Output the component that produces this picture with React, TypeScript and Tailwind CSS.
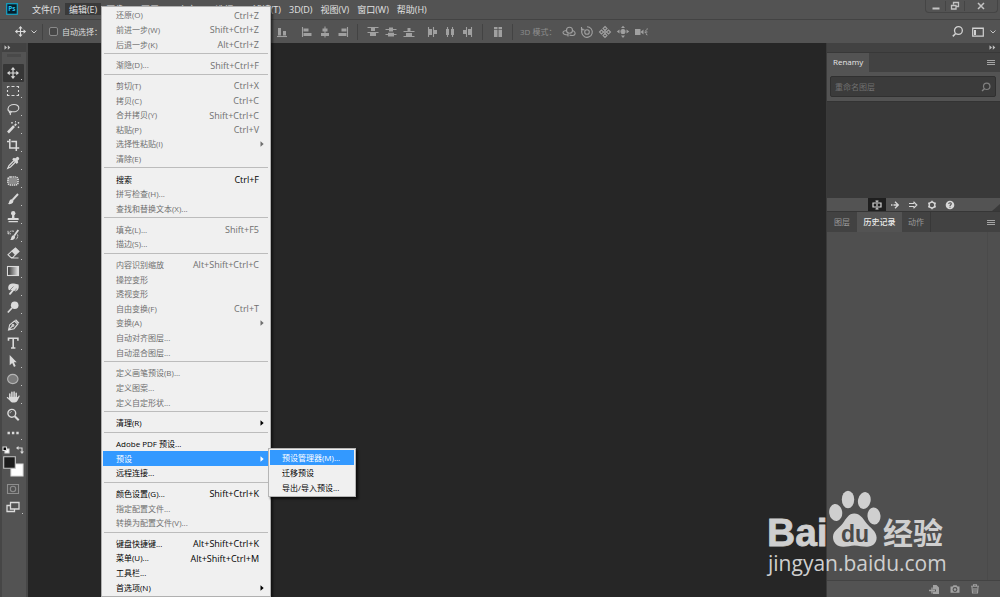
import React from "react";

type Entry = { label: string; keys?: string; on?: boolean; sub?: boolean; open?: boolean } | null;

const editMenu: Entry[] = [
  { label: "还原(O)", keys: "Ctrl+Z" },
  { label: "前进一步(W)", keys: "Shift+Ctrl+Z" },
  { label: "后退一步(K)", keys: "Alt+Ctrl+Z" },
  null,
  { label: "渐隐(D)...", keys: "Shift+Ctrl+F" },
  null,
  { label: "剪切(T)", keys: "Ctrl+X" },
  { label: "拷贝(C)", keys: "Ctrl+C" },
  { label: "合并拷贝(Y)", keys: "Shift+Ctrl+C" },
  { label: "粘贴(P)", keys: "Ctrl+V" },
  { label: "选择性粘贴(I)", sub: true },
  { label: "清除(E)" },
  null,
  { label: "搜索", keys: "Ctrl+F", on: true },
  { label: "拼写检查(H)..." },
  { label: "查找和替换文本(X)..." },
  null,
  { label: "填充(L)...", keys: "Shift+F5" },
  { label: "描边(S)..." },
  null,
  { label: "内容识别缩放", keys: "Alt+Shift+Ctrl+C" },
  { label: "操控变形" },
  { label: "透视变形" },
  { label: "自由变换(F)", keys: "Ctrl+T" },
  { label: "变换(A)", sub: true },
  { label: "自动对齐图层..." },
  { label: "自动混合图层..." },
  null,
  { label: "定义画笔预设(B)..." },
  { label: "定义图案..." },
  { label: "定义自定形状..." },
  null,
  { label: "清理(R)", sub: true, on: true },
  null,
  { label: "Adobe PDF 预设...", on: true },
  { label: "预设", sub: true, on: true, open: true },
  { label: "远程连接...", on: true },
  null,
  { label: "颜色设置(G)...", keys: "Shift+Ctrl+K", on: true },
  { label: "指定配置文件..." },
  { label: "转换为配置文件(V)..." },
  null,
  { label: "键盘快捷键...", keys: "Alt+Shift+Ctrl+K", on: true },
  { label: "菜单(U)...", keys: "Alt+Shift+Ctrl+M", on: true },
  { label: "工具栏...", on: true },
  { label: "首选项(N)", sub: true, on: true },
];

const documentMenus = ["文件(F)", "编辑(E)", "图像(I)", "图层(L)", "文字(Y)", "选择(S)", "滤镜(T)"];
const windowMenus = ["3D(D)", "视图(V)", "窗口(W)", "帮助(H)"];

function Icon({ children, className = "h-[14px] w-[14px]", box = "0 0 14 14" }: { children: React.ReactNode; className?: string; box?: string }) {
  return (
    <svg viewBox={box} className={`shrink-0 ${className}`} fill="none" stroke="currentColor" strokeWidth="1.1" aria-hidden="true">
      {children}
    </svg>
  );
}

const moveShape = (
  <>
    <path d="M7 3v8M3 7h8" strokeWidth="1.2" />
    <path d="M7 1l2.3 2.7H4.700zM7 13l2.300-2.700H4.700zM1 7l2.700-2.300v4.600zM13 7l-2.700-2.300v4.600z" fill="currentColor" stroke="none" />
  </>
);

const tools: { name: string; art: React.ReactNode; plain?: boolean }[] = [
  { name: "移动工具", art: moveShape },
  { name: "矩形选框工具", art: <path d="M1.500 4V2.500H3.500M5.500 2.500h3M10.500 2.500h2V4M12.500 6v2M12.500 10v1.500h-2M8.500 11.500h-3M3.500 11.500h-2V10M1.500 8V6" /> },
  { name: "套索工具", art: <path d="M4.200 9.600C2.700 9.200 1.800 8.200 2 6.700 2.300 4.300 5 2.500 8 2.500s5 1.500 4.800 3.700C12.500 8.500 9.700 10 6.500 9.800c-1 0-1.700-.8-2.500-.6-1 .3-.8 1.800.2 1.700.8-.1 1-.8.900-1.300M4.300 11c.3.700.2 1.400-.2 2" /> },
  { name: "魔棒工具", art: <><path d="M2 12.500l6-6.300" strokeWidth="2.600" /><path d="M8.700 5.600l1.600-1.700" strokeWidth="1.800" /><path d="M6 2v1.600M5.200 2.800h1.600M9.500 1v1.400M12.500 2v1.600M11.700 2.800h1.600M12.500 6.500v1.600M11.700 7.300h1.600" strokeWidth=".9" /></> },
  { name: "裁剪工具", art: <path d="M3.800 1v9h9.400M1 3.500h2M5.300 3.500h5v9.500" strokeWidth="1.500" /> },
  { name: "吸管工具", art: <><path d="M8 4.500L3 9.500l-1.200 2.800L4.500 11l5-5" strokeWidth="1.200" /><path d="M7 3.200l1-.8 1.300.8L11 1.600c.8-.6 2.200.7 1.500 1.500L11 4.700l.6 1.500-.8.900z" fill="currentColor" /></> },
  { name: "修补工具", art: <><rect x="2" y="3" width="10" height="8" rx="2.500" strokeWidth="1.700" strokeDasharray="1.400 .6" /><rect x="3" y="4" width="8" height="6" rx="1" fill="#8c8c8c" stroke="none" /></> },
  { name: "画笔工具", art: <><path d="M6.500 8L12 2" strokeWidth="1.900" /><path d="M5.800 7.200c1 .3 1.800 1.300 1.500 2.500-.4 2-3 2.800-5.600 2.300 1.500-.6 1.100-1.700 1.600-2.800.5-1.300 1.400-2.100 2.500-2z" fill="currentColor" stroke="none" /></> },
  { name: "仿制图章工具", art: <><circle cx="7.200" cy="3.300" r="2.200" fill="currentColor" stroke="none" /><path d="M6.200 4.500h2l.3 3.500H12c.5 0 .7.300.7.700V10H1.700V8.700c0-.5.300-.7.700-.7h3.500zM2.500 11h9.400v1.300H2.500z" fill="currentColor" stroke="none" /></> },
  { name: "历史记录画笔工具", art: <><path d="M8.200 7.700L12.300 2" strokeWidth="1.800" /><path d="M7.600 7.200c1 .3 1.700 1.200 1.400 2.300-.4 2-2.700 2.800-5 2.500 1.200-.7 1-1.700 1.400-2.800.4-1.200 1.200-2 2.200-2z" fill="currentColor" stroke="none" /><path d="M2 5.800C3.500 3.200 5.500 2.600 8 3.300M2 2.800v3h3M11.500 6.500c.7 2-.2 3.800-1.500 5" strokeWidth=".9" strokeDasharray="2 .5" /></> },
  { name: "橡皮擦工具", art: <><path d="M6 5l3.500-3 3.500 3.500-3.500 3.200z" fill="currentColor" /><path d="M5.800 5.200L2 8.700l2.800 2.800h2l2.500-2.700M5 12h7.500" /></> },
  { name: "渐变工具", art: <><defs><linearGradient id="ramp"><stop stopColor="#303030" /><stop offset="1" stopColor="#e8e8e8" /></linearGradient></defs><rect x="1.500" y="2.500" width="11" height="9" fill="url(#ramp)" /></> },
  { name: "涂抹工具", art: <><path d="M3 3c1.500-1.300 3-1.600 5-1.500l4.500 1c.5 2 .3 4-.8 5.500L9.500 9.500 7.500 8 5 8.300 2.800 8C2 6.500 2 4.500 3 3z" fill="currentColor" stroke="none" /><path d="M8.500 6.500L4 11.800" strokeWidth="1.900" strokeLinecap="round" /><path d="M7.500 4.500L4 8M9.500 9l.8-2.500" stroke="#6a6a6a" strokeWidth=".7" /></> },
  { name: "减淡工具", art: <><circle cx="8.700" cy="5.200" r="3.800" fill="currentColor" stroke="none" /><path d="M6 8l-4.200 4.500" strokeWidth="1.700" /></> },
  { name: "钢笔工具", art: <><path d="M2.500 12L3.700 6.700 8.500 3l3.200 3.200L8 10.700zM2.500 12l4-4.200" /><circle cx="7" cy="7.400" r=".9" /><path d="M9 2.300l1-1 3.300 3.500-1 1z" fill="currentColor" stroke="none" /></> },
  { name: "横排文字工具", art: <path d="M2.500 4.700V2.300h9.400v2.400M7.200 2.500v9.300M5 12h4.400" strokeWidth="1.600" /> },
  { name: "路径选择工具", art: <path d="M3.700 1l7 7.200H7.900l1.800 3.900-1.700.8-1.800-4-2.500 2.300z" fill="currentColor" stroke="none" /> },
  { name: "椭圆工具", art: <ellipse cx="6.800" cy="7" rx="5.200" ry="4.600" fill="#7b7b7b" stroke="#b4b4b4" /> },
  { name: "抓手工具", art: <><path d="M3.800 7.500V4M5.900 6.500V2.300M8.100 6.500V1.900M10.200 7V3.300" strokeWidth="1.500" strokeLinecap="round" /><path d="M3 6.700h8l.7.500 1.100-1.700c.8-.1 1.100.5.800 1.100l-2 4c-.7 1.300-1.500 2-3 2H7c-1.500 0-2.300-.8-3-1.900L.7 7.700c0-.8.900-1 1.500-.4L3 8.500z" fill="currentColor" stroke="none" /></> },
  { name: "缩放工具", plain: true, art: <><circle cx="5.800" cy="5.300" r="3.900" strokeWidth="1.400" /><path d="M4 5.300c0-1 .8-1.800 1.800-1.800" strokeWidth=".8" /><path d="M8.700 8.200l4 4" strokeWidth="2" /></> },
  { name: "编辑工具栏", art: <path d="M1.500 7h2.400M5.900 7h2.400M10.300 7h2.400" strokeWidth="2.400" /> },
];

function Bars() {
  return (
    <button aria-label="面板菜单" className="mr-[5px] flex h-full items-center text-[#a5a5a5]">
      <Icon className="h-[7px] w-[8px]" box="0 0 8 7"><path d="M0 1.500h8M0 3.500h8M0 5.500h8" /></Icon>
    </button>
  );
}

function Collapse() {
  return (
    <Icon className="h-[5px] w-[7px]" box="0 0 7 5">
      <path d="M.5.300L3 2.500.5 4.700zM3.800.300l2.500 2.200-2.500 2.200z" fill="currentColor" stroke="none" />
    </Icon>
  );
}

function OptButton({ name, children }: { name: string; children: React.ReactNode }) {
  return (
    <button aria-label={name} className="flex w-[18px] justify-center">
      <Icon>{children}</Icon>
    </button>
  );
}

const Divider = () => <span className="mx-[5px] h-[16px] w-[2px] border-l border-[#434343]" />;

function Row({ entry }: { entry: NonNullable<Entry> }) {
  const tone = entry.open ? "bg-[#3399ff] text-white" : entry.on ? "text-black" : "text-[#6f6f6f]";
  return (
    <div className="relative flex flex-1">
      <button role="menuitem" disabled={!entry.on} className={`flex flex-1 items-center justify-between pl-[13px] leading-none ${tone}`}>
        <span>{entry.label}</span>
        {entry.keys && <span className="pr-[10px] text-[9px] leading-none">{entry.keys}</span>}
        {entry.sub && (
          <Icon className="mr-[5px] h-[6px] w-[4px]" box="0 0 4 6"><path d="M.5.300v5.400L3.700 3z" fill="currentColor" stroke="none" /></Icon>
        )}
      </button>
      {entry.open && (
        <div role="menu" className="absolute -top-[3px] left-full -ml-px flex w-[88px] flex-col border border-[#b5b5b5] bg-[#f0f0f0] p-px text-black shadow-[2px_2px_2px_rgba(0,0,0,0.6)]">
          {["预设管理器(M)...", "迁移预设", "导出/导入预设..."].map((t, i) => (
            <button key={t} role="menuitem" className={`flex h-[15px] items-center pl-[12px] leading-none whitespace-nowrap ${i === 0 ? "bg-[#3399ff] text-white" : ""}`}>{t}</button>
          ))}
        </div>
      )}
    </div>
  );
}

function MenuButton({ label, open }: { label: string; open?: boolean }) {
  return (
    <button className={`flex h-[12px] items-center px-[4px] leading-none whitespace-nowrap ${open ? "bg-[#3a3a3a]" : ""}`}>{label}</button>
  );
}

function TopBar() {
  return (
    <header className="flex h-[20px] items-start border-b border-[#434343]">
      <svg viewBox="0 0 12 12" className="mt-[3px] mr-[10px] ml-[6px] h-[12px] w-[12px]" role="img" aria-label="Ps">
        <rect x=".7" y=".7" width="10.600" height="10.600" fill="#071e2b" stroke="#16a3c7" strokeWidth="1.200" />
        <text x="2.200" y="8.300" fontSize="6.500" fontWeight="700" fontFamily="Open Sans, sans-serif" fill="#23c3ee">Ps</text>
      </svg>
      <nav className="flex pt-[3px] text-[9px]">
        <div className="flex gap-px">
          {documentMenus.map((m) => <MenuButton key={m} label={m} open={m === "编辑(E)"} />)}
        </div>
        <div className="flex">
          {windowMenus.map((m) => <MenuButton key={m} label={m} />)}
        </div>
      </nav>
      <div className="mr-[2px] ml-auto flex h-[13px] items-center divide-x divide-[#454545] rounded-b-sm border border-t-0 border-[#454545] text-[#c4c4c4]">
        <button aria-label="最小化" className="flex w-[20px] justify-center"><Icon className="h-[10px] w-[10px]" box="0 0 10 10"><path d="M1.500 7.500h7" strokeWidth="2" /></Icon></button>
        <button aria-label="还原" className="flex w-[19px] justify-center"><Icon className="h-[10px] w-[10px]" box="0 0 10 10"><path d="M3.500 3.500V1.500h5v4h-2M1.500 4.500h4.500v3.500h-4.500z" strokeWidth="1.300" /></Icon></button>
        <button aria-label="关闭" className="flex w-[32px] justify-center"><Icon className="h-[10px] w-[10px]" box="0 0 10 10"><path d="M2 2l6 6M8 2l-6 6" strokeWidth="1.500" /></Icon></button>
      </div>
    </header>
  );
}

function OptionsBar() {
  return (
    <div className="flex h-[23px] items-center text-[#a0a0a0]">
      <div className="flex w-[273px] shrink-0 items-center text-[#dcdcdc]">
        <button aria-label="移动工具" className="ml-[14px] flex items-center gap-[4px]">
          <Icon className="h-[13px] w-[13px]">{moveShape}</Icon>
          <Icon className="h-[6px] w-[6px]" box="0 0 6 6"><path d="M.5 1.500L3 4l2.500-2.500" strokeWidth=".9" /></Icon>
        </button>
        <Divider />
        <label className="flex items-center gap-[4px] leading-none whitespace-nowrap">
          <input type="checkbox" className="h-[9px] w-[9px] appearance-none rounded-[2px] border border-[#8a8a8a] bg-[#474747]" />
          自动选择：
        </label>
      </div>
      <OptButton name="底对齐"><path d="M2 11.500h10" /><path d="M3 3h3v7.500H3zM8 6h3v4.500H8z" fill="currentColor" stroke="none" /></OptButton>
      <span className="w-[7px]" />
      <OptButton name="左对齐"><path d="M2.500 2v10" /><path d="M3.500 3.500h5v3h-5zM3.500 8h8v3h-8z" fill="currentColor" stroke="none" /></OptButton>
      <OptButton name="水平居中"><path d="M7 1.500v11" /><path d="M4.500 3.500h5v3h-5zM3 8h8v3H3z" fill="currentColor" stroke="none" /></OptButton>
      <OptButton name="右对齐"><path d="M11.500 2v10" /><path d="M5.500 3.500h5v3h-5zM2.500 8h8v3h-8z" fill="currentColor" stroke="none" /></OptButton>
      <Divider />
      <OptButton name="按顶分布"><path d="M1.500 2.500h11M1.500 7.500h11" /><path d="M5 3h4v3H5zM4 8h6v3H4z" fill="currentColor" stroke="none" /></OptButton>
      <OptButton name="垂直居中分布"><path d="M1.500 4.500h11M1.500 9.500h11" /><path d="M5 2.500h4v4H5zM4 7.800h6v3.700H4z" fill="currentColor" stroke="none" /></OptButton>
      <OptButton name="按底分布"><path d="M1.500 6.500h11M1.500 11.500h11" /><path d="M5.500 3h3v3.500h-3zM4 8h6v3.500H4z" fill="currentColor" stroke="none" /></OptButton>
      <span className="w-[5px]" />
      <OptButton name="按左分布"><path d="M3.500 2v10M8.500 2v10" /><path d="M4 4h3v6H4zM9 5h3v4H9z" fill="currentColor" stroke="none" /></OptButton>
      <OptButton name="水平居中分布"><path d="M4.500 2v10M9.500 2v10" /><path d="M3 4h3v6H3zM8 4h3v6H8z" fill="currentColor" stroke="none" /></OptButton>
      <OptButton name="按右分布"><path d="M5.500 2v10M10.500 2v10" /><path d="M2 5h3v4H2zM7 4h3v6H7z" fill="currentColor" stroke="none" /></OptButton>
      <Divider />
      <OptButton name="自动对齐图层"><path d="M3 2h3.500v10H3zM7.500 2H11v10H7.500z" fill="currentColor" stroke="none" /><path d="M2 4.500h10" stroke="#535353" strokeWidth=".7" /></OptButton>
      <Divider />
      <span className="w-[41px] pl-px leading-none whitespace-nowrap text-[#8e8e8e]">3D 模式：</span>
      <OptButton name="旋转 3D 对象"><circle cx="7.500" cy="5.200" r="3" /><path d="M5 5.500C2.500 5.500.8 6.500 1 7.600c.3 1.400 2.500 2.300 5 2.400M6 8.500v3M10.500 5.500c2 .7 3 2.200 2.500 3.500-.5 1.500-3 2-5.500 1" /></OptButton>
      <OptButton name="滚动 3D 对象"><circle cx="7" cy="7" r="2.300" /><path d="M3 3.500A5.300 5.300 0 1 0 7 1.700M1.500 2v2.700h3" /></OptButton>
      <OptButton name="拖动 3D 对象"><path d="M7 1.500l2 2-2 2-2-2zM7 8.500l2 2-2 2-2-2zM1.500 7l2-2 2 2-2 2zM8.500 7l2-2 2 2-2 2z" /><path d="M5 7h4M7 5v4" /></OptButton>
      <OptButton name="滑动 3D 对象"><circle cx="7" cy="6.500" r="2" fill="currentColor" /><path d="M7 .8l2 2.200H5zM7 13l2-2.500H5zM.8 6.500L3.500 4.500v4zM13.200 6.500l-2.700-2v4z" fill="currentColor" stroke="none" /></OptButton>
      <OptButton name="缩放 3D 对象"><path d="M1 4h5.500v6H1zM6.500 7l3-2.500v5z" fill="currentColor" stroke="none" /><path d="M13.500 3.500L11 7l2.500 3.500M12 7h2" strokeDasharray="1.500 .6" /></OptButton>
      <div className="ml-auto flex items-center text-[#d2d2d2]">
        <button aria-label="搜索" className="mr-[8px]"><Icon className="h-[13px] w-[13px]"><circle cx="8" cy="6" r="4.200" strokeWidth="1.400" /><path d="M5 9.200L2 12.300" strokeWidth="1.700" /></Icon></button>
        <button aria-label="工作区" className="mr-[4px] flex items-center gap-[6px]">
          <Icon className="h-[10px] w-[12px]" box="0 0 12 10"><path d="M.7 1.200h10.600v8H.7zM.7 1.500h10.600" strokeWidth="1.200" /><path d="M2 3h2v5H2z" fill="currentColor" stroke="none" /></Icon>
          <Icon className="h-[6px] w-[6px]" box="0 0 6 6"><path d="M.5 1.500L3 4l2.500-2.500" strokeWidth=".9" /></Icon>
        </button>
      </div>
    </div>
  );
}

function Toolbar() {
  return (
    <aside className="flex w-[28px] shrink-0 flex-col border-x-2 border-[#464646] bg-[#535353] text-[#dadada]">
      <div className="flex h-[9px] shrink-0 items-center bg-[#424242] pl-[2px] text-[#c0c0c0]"><Collapse /></div>
      <span className="mx-auto mt-[2px] mb-[7px] h-[3px] w-[14px] shrink-0 bg-[#494949]" />
      {tools.map((t, i) => (
        <button key={t.name} aria-label={t.name} className={`relative ml-px flex h-[18px] w-[21px] shrink-0 items-center pl-[3px] ${i === 0 ? "rounded-[1px] bg-[#363636]" : ""}`}>
          <Icon>{t.art}</Icon>
          {!t.plain && <span className="absolute right-[2px] bottom-[2px] h-px w-px bg-[#c8c8c8]" />}
        </button>
      ))}
      <div className="mt-[3px] flex h-[9px] shrink-0 items-center justify-between pr-[2px]">
        <button aria-label="默认颜色"><Icon className="h-[8px] w-[8px]" box="0 0 8 8"><path d="M3 3h4v4H3z" fill="#fff" /><path d="M1 1h3.500v3.500H1z" fill="#000" /></Icon></button>
        <button aria-label="切换颜色"><Icon className="h-[8px] w-[8px]" box="0 0 8 8"><path d="M2 2h4v4" /><path d="M0 2l2.500-2v4zM6 8L4 5.500h4z" fill="currentColor" stroke="none" /></Icon></button>
      </div>
      <button aria-label="前景色和背景色" className="mt-[2px] ml-px shrink-0">
        <Icon className="h-[21px] w-[21px]" box="0 0 21 21"><path d="M8 8h12v12H8z" fill="#fff" stroke="#ddd" /><path d="M.7.700h11.600v11.600H.7z" fill="#1c1c1c" stroke="#c8c8c8" /></Icon>
      </button>
      <button aria-label="快速蒙版" className="mt-[5px] ml-[4px] shrink-0 text-[#8d8d8d]"><Icon><path d="M1.500 2.500h11v9h-11z" /><circle cx="7" cy="7" r="2.700" /></Icon></button>
      <button aria-label="屏幕模式" className="relative mt-[4px] ml-[4px] w-[17px] shrink-0"><Icon><path d="M4.500 2.500h8.500v6.500H4.500zM4 5.500H1v6h7.500V9.500" strokeWidth="1.300" /></Icon><span className="absolute right-0 bottom-0 h-px w-px bg-[#c8c8c8]" /></button>
    </aside>
  );
}

function Panels() {
  return (
    <aside className="flex w-[174px] shrink-0 flex-col border-l border-[#3a3a3a] bg-[#4f4f4f]">
      <div className="flex h-[9px] shrink-0 items-center justify-end bg-[#424242] pr-[4px] text-[#c0c0c0]"><Collapse /></div>
      <div className="flex h-[20px] shrink-0 items-stretch justify-between border-t border-[#383838] bg-[#424242]">
        <button className="bg-[#535353] px-[6px] pb-[2px] font-medium text-[#e6e6e6]">Renamy</button>
        <Bars />
      </div>
      <div className="shrink-0 bg-[#535353] py-[4px] pr-[4px] pl-[3px]">
        <label className="flex h-[21px] items-center rounded-[2px] border border-[#303030] bg-[#3b3b3b] px-[4px] text-[#808080]">
          <input aria-label="重命名图层" placeholder="重命名图层" className="min-w-0 flex-1 bg-transparent outline-none placeholder:text-[#707070]" />
          <Icon className="h-[10px] w-[10px]"><circle cx="8" cy="6" r="4.500" strokeWidth="1.700" /><path d="M5 9.200L1.500 12.700" strokeWidth="2" /></Icon>
        </label>
      </div>
      <div className="h-[97px] shrink-0 border-t border-[#333] bg-[#393939]" />
      <div className="flex h-[13px] shrink-0 items-center bg-[#535353] pl-[41px] text-[#d8d8d8]">
        <button aria-label="重命名" className="flex h-full w-[18px] items-center justify-center bg-[#1f1f1f]"><Icon className="h-[10px] w-[10px]" box="0 0 10 10"><path d="M5 1v8M3.500 1h3M3.500 9h3M4 3H1v4h3M6 3h3v4H6" strokeWidth="1.200" /></Icon></button>
        <button aria-label="下一个" className="flex w-[18px] justify-center"><Icon className="h-[10px] w-[10px]" box="0 0 10 10"><path d="M1 5h1.500M3.500 5h4M5 1.800L8.300 5 5 8.200" strokeWidth="1.300" /></Icon></button>
        <button aria-label="全部" className="flex w-[18px] justify-center"><Icon className="h-[10px] w-[10px]" box="0 0 10 10"><path d="M1 3.500h5M1 6.500h5M5.500 1.800L8.800 5 5.500 8.200" strokeWidth="1.200" /></Icon></button>
        <button aria-label="设置" className="flex w-[19px] justify-center"><Icon className="h-[10px] w-[10px]" box="0 0 10 10"><circle cx="5" cy="5" r="2.900" strokeWidth="1.400" /><path d="M5 .7v1.600M5 7.700v1.600M1.300 2.900l1.300.7M7.400 6.400l1.300.7M1.300 7.100l1.300-.7M7.400 3.600l1.300-.7" strokeWidth="1.500" /></Icon></button>
        <button aria-label="帮助" className="flex w-[18px] justify-center"><Icon className="h-[10px] w-[10px]" box="0 0 10 10"><circle cx="5" cy="5" r="4.300" fill="currentColor" stroke="none" /><path d="M3.700 4c0-1.700 2.600-1.600 2.600-.2C6.300 4.800 5 4.700 5 6M5 6.800v1" stroke="#535353" /></Icon></button>
        <Icon className="mt-auto ml-auto h-[7px] w-[8px]" box="0 0 8 7"><path d="M8 0v7H0z" fill="#3a3a3a" stroke="none" /></Icon>
      </div>
      <div className="flex h-[21px] shrink-0 border-t border-[#363636] bg-[#424242] text-[#9a9a9a]">
        <button className="w-[30px]">图层</button>
        <button className="w-[45px] bg-[#535353] font-medium text-[#ededed]">历史记录</button>
        <button className="w-[29px] border-r border-[#383838]">动作</button>
        <div className="ml-auto"><Bars /></div>
      </div>
      <div className="mr-[12px] min-h-0 flex-1 border-r border-[#4a4a4a]" />
      <div className="flex h-[17px] shrink-0 items-center justify-end gap-[10px] border-t border-[#434343] bg-[#535353] pr-[20px] text-[#a2a2a2]">
        <button aria-label="从当前状态创建新文档"><Icon className="h-[11px] w-[12px]" box="0 0 12 11"><path d="M5 1h3.500L11 3.500V10H5V7.500h3v-2H5z" fill="currentColor" stroke="none" /><path d="M1 6.500h6M4 3.500v6" strokeWidth="1.300" /></Icon></button>
        <button aria-label="创建新快照"><Icon className="h-[10px] w-[10px]" box="0 0 10 10"><path d="M.5 2.500h2l1-1.300h3l1 1.300h2v6.300h-9z" fill="currentColor" stroke="none" /><circle cx="5" cy="5.500" r="1.900" stroke="#505050" /></Icon></button>
        <button aria-label="删除"><Icon className="h-[10px] w-[10px]" box="0 0 10 10"><path d="M1 2.200h8M3.500 2V.8h3V2M2 3l.5 6h5L8 3M4 4v4M6 4v4" /></Icon></button>
      </div>
    </aside>
  );
}

function Watermark() {
  return (
    <div className="pointer-events-none absolute right-[52px] bottom-[23px] text-[#cfcfcf]">
      <svg viewBox="0 0 184 64" className="h-[64px] w-[184px] overflow-visible" fill="currentColor" fontWeight="700" role="img" aria-label="Baidu 经验">
        <text x="3" y="58" fontSize="39" fontFamily="Liberation Sans, sans-serif" stroke="currentColor" strokeWidth=".8">Bai</text>
        <ellipse cx="71.700" cy="24.500" rx="6.500" ry="8.500" transform="rotate(-8 71.700 24.500)" />
        <ellipse cx="84" cy="11.500" rx="6.200" ry="8.700" />
        <ellipse cx="100.300" cy="12.500" rx="6.300" ry="8.500" transform="rotate(12 100.300 12.500)" />
        <ellipse cx="110" cy="28" rx="6.500" ry="8.500" transform="rotate(-6 110 28)" />
        <path d="M90.300 25.500c5.500 0 8.500 4.500 12 9.500 4 5 10 8 10.300 14.500.2 5.500-4 9.300-9.600 9.300-5 0-8-1.300-12.500-1.300s-7 1.500-11.500 1.300c-6-.2-10-4-10-9.800.2-6.500 6-8.500 9.700-13.500 3.500-5 6-10 11.600-10z" />
        <text x="77" y="54" fontSize="23" fontFamily="Liberation Sans, sans-serif" fill="#4a4a4a">du</text>
        <text x="119" y="56" fontSize="30" fontFamily="Noto Sans CJK SC, sans-serif">经验</text>
      </svg>
      <p className="pl-[4px] font-['Open_Sans',sans-serif] text-[21px] leading-[22px] font-medium">jingyan.baidu.com</p>
    </div>
  );
}

export default function App() {
  return (
    <div className="relative flex h-screen flex-col overflow-hidden bg-[#535353] font-['Open_Sans','Noto_Sans_CJK_SC',sans-serif] text-[8px] text-[#e2e2e2]">
      <TopBar />
      <OptionsBar />
      <div className="flex min-h-0 flex-1">
        <Toolbar />
        <main className="min-w-0 flex-1 bg-[#262626]" />
        <Panels />
      </div>
      <div role="menu" aria-label="编辑" className="absolute top-[6px] bottom-0 left-[101px] flex w-[170px] flex-col border border-[#b0b0b0] bg-[#f0f0f0] p-px shadow-[2px_2px_2px_rgba(0,0,0,0.5)]">
        {editMenu.map((e, i) =>
          e ? <Row key={i} entry={e} /> : (
            <div key={i} role="separator" className="h-[6px] shrink-0 pt-px"><div className="mx-px h-px bg-[#bcbcbc]" /></div>
          )
        )}
      </div>
      <Watermark />
    </div>
  );
}
